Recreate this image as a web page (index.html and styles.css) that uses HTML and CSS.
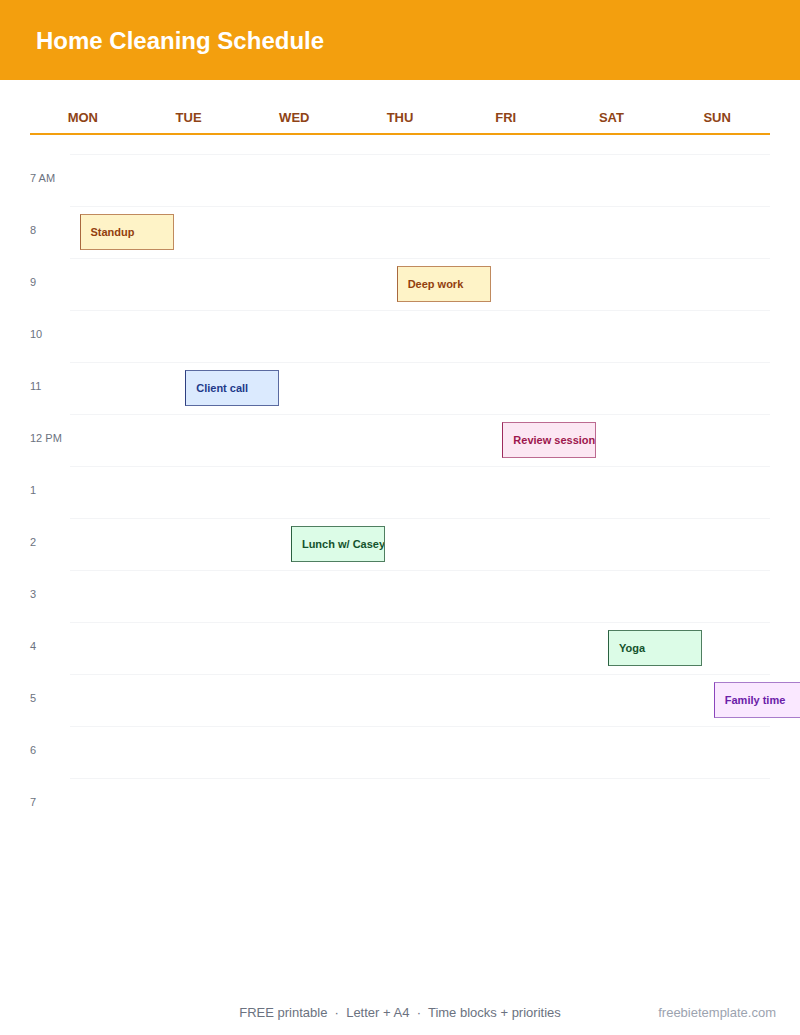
FILE: index.html
```html
<!DOCTYPE html>
<html lang="en">
<head>
<meta charset="utf-8">
<title>Home Cleaning Schedule</title>
<link rel="stylesheet" href="styles.css">
</head>
<body>
<header class="banner">
  <h1 class="title">Home Cleaning Schedule</h1>
</header>
<main class="sheet">
  <div class="days">
    <div class="day">MON</div>
    <div class="day">TUE</div>
    <div class="day">WED</div>
    <div class="day">THU</div>
    <div class="day">FRI</div>
    <div class="day">SAT</div>
    <div class="day">SUN</div>
  </div>
  <div class="grid">
    <div class="row"><span class="time">7 AM</span><span class="lane"></span></div>
    <div class="row"><span class="time">8</span><span class="lane"></span></div>
    <div class="row"><span class="time">9</span><span class="lane"></span></div>
    <div class="row"><span class="time">10</span><span class="lane"></span></div>
    <div class="row"><span class="time">11</span><span class="lane"></span></div>
    <div class="row"><span class="time">12 PM</span><span class="lane"></span></div>
    <div class="row"><span class="time">1</span><span class="lane"></span></div>
    <div class="row"><span class="time">2</span><span class="lane"></span></div>
    <div class="row"><span class="time">3</span><span class="lane"></span></div>
    <div class="row"><span class="time">4</span><span class="lane"></span></div>
    <div class="row"><span class="time">5</span><span class="lane"></span></div>
    <div class="row"><span class="time">6</span><span class="lane"></span></div>
    <div class="row"><span class="time">7</span><span class="lane"></span></div>

    <div class="event amber" style="--day:0; --slot:1">Standup</div>
    <div class="event amber" style="--day:3; --slot:2">Deep work</div>
    <div class="event blue" style="--day:1; --slot:4">Client call</div>
    <div class="event pink" style="--day:4; --slot:5">Review session</div>
    <div class="event green" style="--day:2; --slot:7">Lunch w/ Casey</div>
    <div class="event green" style="--day:5; --slot:9">Yoga</div>
    <div class="event purple" style="--day:6; --slot:10">Family time</div>
  </div>
</main>
<footer class="footer">
  <span class="footer-info">FREE printable &nbsp;·&nbsp; Letter + A4 &nbsp;·&nbsp; Time blocks + priorities</span>
  <span class="footer-site">freebietemplate.com</span>
</footer>
</body>
</html>
```
FILE: styles.css
```css
html, body {
  margin: 0;
  padding: 0;
  overflow-x: hidden;
}

body {
  font-family: "Liberation Sans", Arial, sans-serif;
  background: #ffffff;
  min-height: 1035px;
  display: flex;
  flex-direction: column;
}

.banner {
  background: #f39f0e;
  height: 80px;
  display: flex;
  align-items: center;
  padding: 0 36px;
}

.title {
  margin: 0;
  color: #ffffff;
  font-size: 24px;
  font-weight: 700;
  line-height: 28px;
  padding-top: 2px;
}

.sheet {
  flex: 1;
  padding: 0 30px;
}

.days {
  display: grid;
  grid-template-columns: repeat(7, 1fr);
  margin-top: 20px;
  padding: 10px 0 8px;
  border-bottom: 2px solid #f39f0e;
}

.day {
  text-align: center;
  font-size: 13px;
  font-weight: 700;
  line-height: 15px;
  color: #8f4416;
}

.grid {
  position: relative;
  margin-top: 19px;
}

.row {
  display: grid;
  grid-template-columns: 40px 1fr;
  height: 52px;
}

.time {
  font-size: 11px;
  line-height: 14px;
  color: #6b7280;
  padding-top: 17px;
}

.lane {
  border-top: 1px solid #f3f4f6;
}

.event {
  position: absolute;
  left: calc(49.5px + var(--day) * 105.714px);
  top: calc(var(--slot) * 52px + 8px);
  width: 94px;
  height: 36px;
  box-sizing: border-box;
  padding-left: 10px;
  display: flex;
  align-items: center;
  font-size: 11px;
  font-weight: 700;
  white-space: nowrap;
  overflow: hidden;
  border: 1px solid;
}

.amber {
  background: #fef3c7;
  color: #92400e;
  border-color: #c08a5e;
  border-left-color: #a8683e;
}

.blue {
  background: #dbeafe;
  color: #1e3a8a;
  border-color: #5a6aa0;
  border-left-color: #2e3f80;
}

.pink {
  background: #fce7f3;
  color: #9d174d;
  border-color: #bc6a90;
  border-left-color: #9d2a5c;
}

.green {
  background: #dcfce7;
  color: #14532d;
  border-color: #4f7e60;
  border-left-color: #2a6040;
}

.purple {
  background: #fae8ff;
  color: #6b21a8;
  border-color: #a97ccb;
  border-left-color: #8a44bc;
}

.footer {
  position: relative;
  display: flex;
  justify-content: center;
  padding: 0 24px 15px;
  font-size: 13px;
  line-height: 15px;
}

.footer-info {
  color: #6b7280;
}

.footer-site {
  position: absolute;
  right: 24px;
  top: 0;
  color: #9ca3af;
}
```
